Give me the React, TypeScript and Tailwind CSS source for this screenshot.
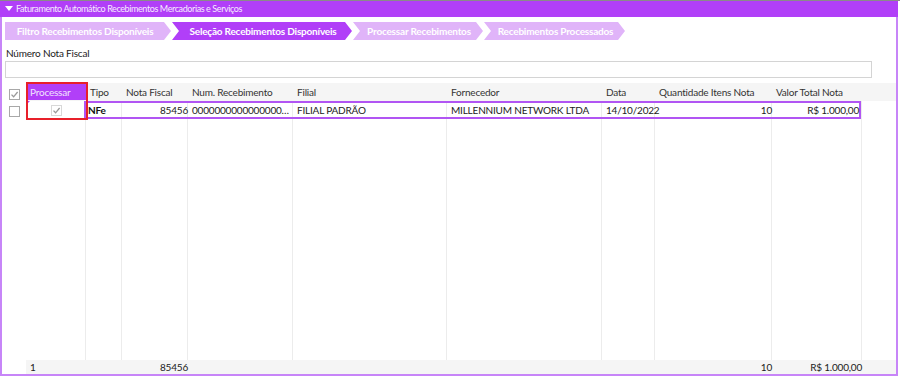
import React from 'react';

const cols = [
  { key: 'proc', label: 'Processar', w: 'w-[60px]' },
  { key: 'tipo', label: 'Tipo', w: 'w-[36px]' },
  { key: 'nf', label: 'Nota Fiscal', w: 'w-[66px]' },
  { key: 'num', label: 'Num. Recebimento', w: 'w-[105px]' },
  { key: 'filial', label: 'Filial', w: 'w-[154px]' },
  { key: 'forn', label: 'Fornecedor', w: 'w-[155px]' },
  { key: 'data', label: 'Data', w: 'w-[53px]' },
  { key: 'qtd', label: 'Quantidade Itens Nota', w: 'w-[117px]' },
  { key: 'valor', label: 'Valor Total Nota', w: 'w-[90px]' },
];

const tabs = [
  { label: 'Filtro Recebimentos Disponíveis', w: 'w-[166px]', active: false, first: true },
  { label: 'Seleção Recebimentos Disponíveis', w: 'w-[180px]', active: true, first: false },
  { label: 'Processar Recebimentos', w: 'w-[130px]', active: false, first: false },
  { label: 'Recebimentos Processados', w: 'w-[141px]', active: false, first: false },
];

function Check({ checked, className = '' }: { checked?: boolean; className?: string }) {
  return (
    <div className={`w-[11px] h-[11px] border border-[#a8a8a8] bg-white flex items-center justify-center ${className}`}>
      {checked && (
        <svg width="9" height="9" viewBox="0 0 9 9">
          <path d="M1.5 4.6 L3.6 6.8 L7.6 2" fill="none" stroke="#9a9a9a" strokeWidth="1.3" />
        </svg>
      )}
    </div>
  );
}

export default function App() {
  return (
    <div className="w-[900px] h-[376px] bg-white flex flex-col text-[10px] tracking-[-0.2px] whitespace-nowrap text-[#222] font-['Lato','Noto_Sans',sans-serif] overflow-hidden">
      <div className="h-px bg-[#8a8a8a]" />
      {/* title bar */}
      <div className="h-[16px] bg-[#b13ff8] flex items-center pl-[5px] text-[#f6ecff] text-[9px] tracking-[-0.4px] w-[898px]">
        <svg width="8" height="6" viewBox="0 0 8 6" className="mr-[3px]">
          <path d="M0 0 H8 L4 5 Z" fill="#ffffff" />
        </svg>
        Faturamento Automático Recebimentos Mercadorias e Serviços
      </div>

      <div className="flex-1 w-[898px] border-l-2 border-r-2 border-b-2 border-[#c785f8] flex flex-col">
        {/* wizard tabs */}
        <div className="flex items-center gap-px pl-[3px] pt-[4px] h-[24px]">
          {tabs.map((t) => (
            <div
              key={t.label}
              className={`${t.w} h-[18px] flex items-center justify-center font-bold text-white ${
                t.active ? 'bg-[#b13ff8]' : 'bg-[#e0b4f9]'
              } ${
                t.first
                  ? '[clip-path:polygon(0_0,calc(100%-7px)_0,100%_50%,calc(100%-7px)_100%,0_100%)]'
                  : '[clip-path:polygon(0_0,calc(100%-7px)_0,100%_50%,calc(100%-7px)_100%,0_100%,7px_50%)]'
              }`}
            >
              <span className={t.first ? 'pr-[6px]' : 'pl-[2px]'}>{t.label}</span>
            </div>
          ))}
        </div>

        {/* filter */}
        <div className="pl-[4px] pt-[6px] leading-[12px]">Número Nota Fiscal</div>
        <div className="ml-[3px] mt-[2px] w-[867px] h-[17px] border border-[#d4d4d4] bg-white" />

        {/* grid */}
        <div className="flex-1 flex mt-[5px] relative">
          {/* selector column */}
          <div className="w-[24px] flex flex-col items-center pt-[6px] gap-[6px]">
            <Check checked />
            <Check />
          </div>

          <div className="flex-1 flex flex-col">
            {/* header */}
            <div className="h-[18px] bg-[#f5f5f5] flex items-center">
              {cols.map((c) => (
                <div
                  key={c.key}
                  className={`${c.w} h-[16px] flex items-center px-[4px] ${
                    c.key === 'proc' ? 'bg-[#b13ff8] text-[#f2e4ff]' : 'text-[#333]'
                  }`}
                >
                  {c.label}
                </div>
              ))}
            </div>

            {/* body with columns */}
            <div className="flex-1 flex relative">
              {cols.map((c) => (
                <div key={c.key} className={`${c.w} border-r border-[#ececec] h-full`} />
              ))}

              {/* data row */}
              <div className="absolute left-0 top-0 w-[837px] h-[18px] flex items-center">
                <div className="w-[60px] h-[18px] flex items-center justify-center relative">
                  <div className="absolute left-0 top-0 w-0 h-0 border-t-[4px] border-r-[4px] border-t-[#b13ff8] border-r-transparent" />
                  <Check checked className="border-[#d8d8d8]" />
                </div>
                <div className="w-[777px] h-[18px] border-2 border-[#b155f3] flex items-center -ml-[2px]">
                  <div className="w-[36px] pl-[2px] font-bold text-[#111]">NFe</div>
                  <div className="w-[66px] text-right">85456</div>
                  <div className="w-[105px] pl-[4px] pr-[2px] truncate">000000000000000000000000085456</div>
                  <div className="w-[154px] pl-[4px]">FILIAL PADRÃO</div>
                  <div className="w-[155px] pl-[4px]">MILLENNIUM NETWORK LTDA</div>
                  <div className="w-[53px] pl-[4px]">14/10/2022</div>
                  <div className="w-[117px] text-right">10</div>
                  <div className="w-[87px] text-right">R$ 1.000,00</div>
                </div>
              </div>

              {/* red highlight around Processar column */}
              <div className="absolute left-0 -top-[19px] w-[62px] h-[38px] border-2 border-[#e8202a]" />
            </div>

            {/* footer */}
            <div className="h-[14px] bg-[#f5f5f5] flex items-center">
              <div className="w-[60px] pl-[4px]">1</div>
              <div className="w-[36px]" />
              <div className="w-[66px] text-right">85456</div>
              <div className="w-[105px]" />
              <div className="w-[154px]" />
              <div className="w-[155px]" />
              <div className="w-[53px]" />
              <div className="w-[117px] text-right">10</div>
              <div className="w-[90px] text-right">R$ 1.000,00</div>
            </div>
          </div>
        </div>
      </div>
    </div>
  );
}
